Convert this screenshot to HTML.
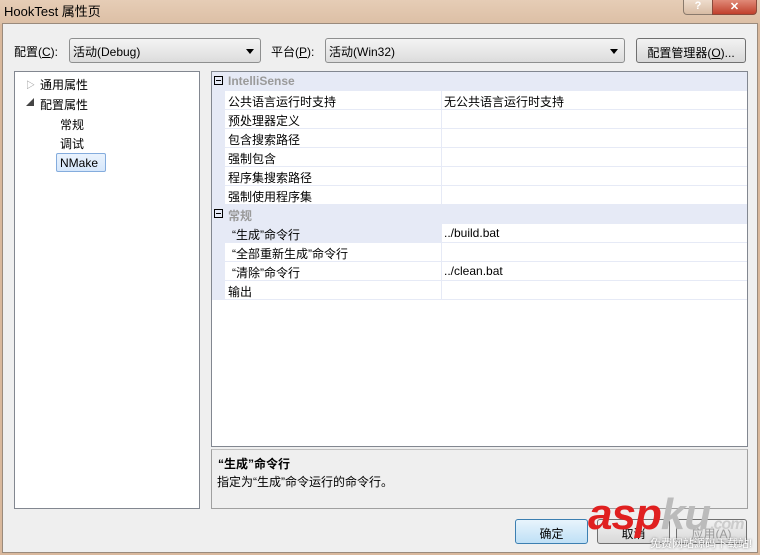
<!DOCTYPE html>
<html><head><meta charset="utf-8"><style>
*{margin:0;padding:0;box-sizing:border-box}
body{width:760px;height:555px;overflow:hidden;background:#d9b89c;font-family:"Liberation Sans","Noto Sans CJK SC",sans-serif;font-size:12px;color:#000;position:relative}
.title{position:absolute;left:0;top:0;width:760px;height:24px;background:linear-gradient(#e6cdb6,#dcbfa5)}
.title span{position:absolute;left:4px;top:1px;font-size:13px}
.frame{position:absolute;left:2px;top:23px;width:756px;height:530px;background:#efefef;border:1px solid #9a8a7c}
.abs{position:absolute}
.combo{position:absolute;height:25px;border:1px solid #8e8f8f;border-radius:3px;background:linear-gradient(#f4f4f4,#dcdcdc);padding:4px 3px}
.combo:after{content:"";position:absolute;right:6px;top:10px;border:4px solid transparent;border-top:5px solid #000;border-bottom:0}
.btn{position:absolute;height:25px;border:1px solid #707070;border-radius:3px;background:linear-gradient(#f2f2f2,#d8d8d8);text-align:center;padding-top:5px}
.panel{position:absolute;background:#fff;border:1px solid #828790}
.row{position:absolute;left:0;width:535px;height:19px;border-bottom:1px solid #e6eaf6}
.row .k{position:absolute;left:16px;top:2px}
.row .v{position:absolute;left:232px;top:2px}
.row .d{position:absolute;left:229px;top:0;width:1px;height:19px;background:#e6eaf6}
.cat{background:#e6eaf6;color:#9a9a9a;font-weight:bold}
.cat .box{position:absolute;left:2px;top:4px;width:9px;height:9px;border:1px solid #000}
.cat .box:after{content:"";position:absolute;left:1px;top:3px;width:5px;height:1px;background:#000}
.gut{position:absolute;left:0;top:0;width:13px;height:228px;background:#e6eaf6}
</style></head><body>
<div class="title"><span>HookTest 属性页</span>
<div class="abs" style="left:683px;top:0;width:30px;height:15px;border:1px solid #8a7a6c;border-top:0;border-radius:0 0 0 4px;background:linear-gradient(#eedccc,#d8bca4);text-align:center;font-size:11px;color:#fff;font-weight:bold">?</div>
<div class="abs" style="left:712px;top:0;width:45px;height:15px;border:1px solid #8a4a3c;border-top:0;border-radius:0 0 4px 0;background:linear-gradient(#e08a78,#c0402c);text-align:center;font-size:11px;color:#fff;font-weight:bold">✕</div>
</div>
<div class="frame"></div>
<div class="abs" style="left:14px;top:43px">配置(<u>C</u>):</div>
<div class="combo" style="left:69px;top:38px;width:192px">活动(Debug)</div>
<div class="abs" style="left:271px;top:43px">平台(<u>P</u>):</div>
<div class="combo" style="left:325px;top:38px;width:300px">活动(Win32)</div>
<div class="btn" style="left:636px;top:38px;width:110px">配置管理器(<u>O</u>)...</div>

<div class="panel" style="left:14px;top:71px;width:186px;height:438px">
<div class="abs" style="left:11px;top:6px;color:#888;font-size:9px">▷</div>
<div class="abs" style="left:25px;top:4px">通用属性</div>
<div class="abs" style="left:11px;top:25px;color:#444;font-size:8px">◢</div>
<div class="abs" style="left:25px;top:24px">配置属性</div>
<div class="abs" style="left:45px;top:44px">常规</div>
<div class="abs" style="left:45px;top:63px">调试</div>
<div class="abs" style="left:41px;top:81px;width:50px;height:19px;border:1px solid #84acdd;border-radius:2px;background:linear-gradient(#eaf3fd,#d6e7fb);padding:2px 3px">NMake</div>
</div>

<div class="panel" style="left:211px;top:71px;width:537px;height:376px">
<div class="gut"></div>
<div class="row cat" style="top:0"><div class="box"></div><span class="k">IntelliSense</span></div>
<div class="row" style="top:19px"><span class="k">公共语言运行时支持</span><div class="d"></div><span class="v">无公共语言运行时支持</span></div>
<div class="row" style="top:38px"><span class="k">预处理器定义</span><div class="d"></div></div>
<div class="row" style="top:57px"><span class="k">包含搜索路径</span><div class="d"></div></div>
<div class="row" style="top:76px"><span class="k">强制包含</span><div class="d"></div></div>
<div class="row" style="top:95px"><span class="k">程序集搜索路径</span><div class="d"></div></div>
<div class="row" style="top:114px"><span class="k">强制使用程序集</span><div class="d"></div></div>
<div class="row cat" style="top:133px"><div class="box"></div><span class="k">常规</span></div>
<div class="row" style="top:152px"><div class="abs" style="left:13px;top:0;width:216px;height:18px;background:#e6eaf6"></div><span class="k" style="left:20px">“生成”命令行</span><div class="d"></div><span class="v">../build.bat</span></div>
<div class="row" style="top:171px"><span class="k" style="left:20px">“全部重新生成”命令行</span><div class="d"></div></div>
<div class="row" style="top:190px"><span class="k" style="left:20px">“清除”命令行</span><div class="d"></div><span class="v">../clean.bat</span></div>
<div class="row" style="top:209px"><span class="k">输出</span><div class="d"></div></div>
</div>

<div class="abs" style="left:211px;top:449px;width:537px;height:60px;border:1px solid #a0a0a0;border-top:1px solid #c0c0c0;background:#efefef">
<div class="abs" style="left:6px;top:5px;font-weight:bold">“生成”命令行</div>
<div class="abs" style="left:5px;top:23px">指定为“生成”命令运行的命令行。</div>
</div>

<div class="btn" style="left:515px;top:519px;width:73px;border-color:#3c7fb1;background:linear-gradient(#e8f4fc,#bfe0f6)">确定</div>
<div class="btn" style="left:597px;top:519px;width:73px">取消</div>
<div class="btn" style="left:676px;top:519px;width:71px;color:#999">应用(A)</div>
<div class="abs" style="left:588px;top:490px;font-size:44px;font-weight:bold;font-style:italic;color:#e02020;letter-spacing:-1px">asp<span style="color:#bbb">ku</span><span style="font-size:16px;color:#ccc">.com</span></div>
<div class="abs" style="left:650px;top:535px;font-size:11px;color:#fff;text-shadow:0 0 2px #666">免费网站源码下载站!</div>
</body></html>
